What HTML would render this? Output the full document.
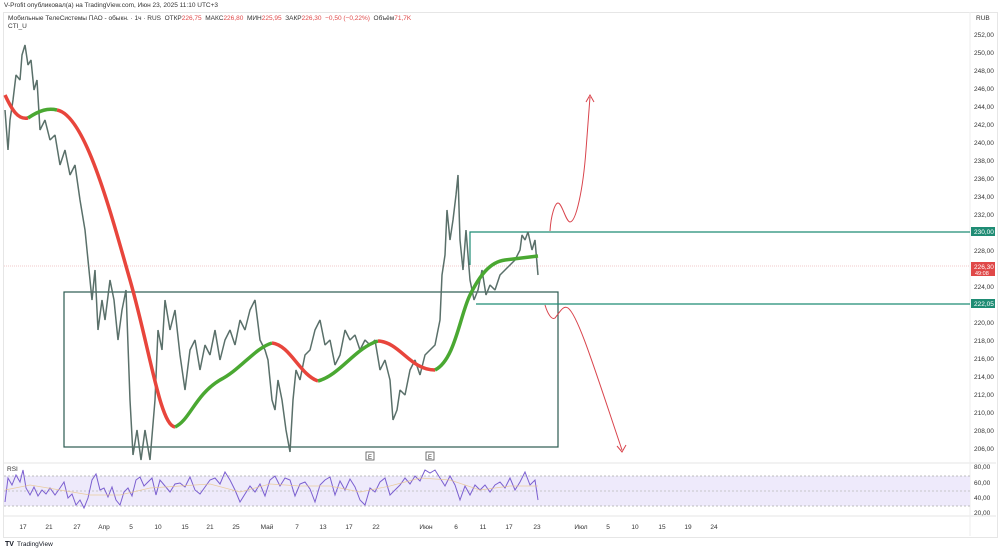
<!DOCTYPE html>
<html><head><meta charset="utf-8"><style>
body{margin:0;width:1000px;height:551px;background:#fff;font-family:"Liberation Sans","Noto Sans CJK SC",sans-serif;overflow:hidden;position:relative}
.t{position:absolute;font-size:6.5px;color:#333;white-space:nowrap}
.r{color:#e04848}
</style></head><body>
<div class="t" style="left:4px;top:2px">V-Profit опубликовал(а) на TradingView.com, Июн 23, 2025 11:10 UTC+3</div>
<div style="position:absolute;left:3px;top:12px;width:993px;height:524px;border:1px solid #e6e6e6"></div>
<div class="t" style="left:8px;top:15px">Мобильные ТелеСистемы ПАО - обыкн. · 1ч · RUS &nbsp;ОТКР<span class="r">226,75</span> &nbsp;МАКС<span class="r">226,80</span> &nbsp;МИН<span class="r">225,95</span> &nbsp;ЗАКР<span class="r">226,30 &nbsp;−0,50 (−0,22%)</span> &nbsp;Объём<span class="r">71,7K</span></div>
<div class="t" style="left:8px;top:23px">CTI_U</div>
<div class="t" style="left:976px;top:15px">RUB</div>
<svg width="1000" height="551" style="position:absolute;left:0;top:0">
<line x1="4" y1="463" x2="996" y2="463" stroke="#e6e6e6"/>
<line x1="4" y1="516" x2="996" y2="516" stroke="#e6e6e6"/>
<line x1="970" y1="12" x2="970" y2="536" stroke="#eee"/>
<g font-size="6.5" fill="#333" font-family="Liberation Sans">
<text x="974" y="37">252,00</text><text x="974" y="55">250,00</text><text x="974" y="73">248,00</text><text x="974" y="91">246,00</text><text x="974" y="109">244,00</text><text x="974" y="127">242,00</text><text x="974" y="145">240,00</text><text x="974" y="163">238,00</text><text x="974" y="181">236,00</text><text x="974" y="199">234,00</text><text x="974" y="217">232,00</text><text x="974" y="253">228,00</text><text x="974" y="289">224,00</text><text x="974" y="325">220,00</text><text x="974" y="343">218,00</text><text x="974" y="361">216,00</text><text x="974" y="379">214,00</text><text x="974" y="397">212,00</text><text x="974" y="415">210,00</text><text x="974" y="433">208,00</text><text x="974" y="451">206,00</text>
<text x="974" y="469">80,00</text><text x="974" y="485">60,00</text><text x="974" y="500">40,00</text><text x="974" y="515">20,00</text>
<g text-anchor="middle"><text x="23" y="529">17</text><text x="49" y="529">21</text><text x="77" y="529">27</text><text x="104" y="529">Апр</text><text x="131" y="529">5</text><text x="158" y="529">10</text><text x="185" y="529">15</text><text x="210" y="529">21</text><text x="236" y="529">25</text><text x="267" y="529">Май</text><text x="297" y="529">7</text><text x="323" y="529">13</text><text x="349" y="529">17</text><text x="376" y="529">22</text><text x="426" y="529">Июн</text><text x="456" y="529">6</text><text x="483" y="529">11</text><text x="509" y="529">17</text><text x="537" y="529">23</text><text x="581" y="529">Июл</text><text x="608" y="529">5</text><text x="635" y="529">10</text><text x="662" y="529">15</text><text x="688" y="529">19</text><text x="714" y="529">24</text></g>
<text x="7" y="471">RSI</text>
</g>
<line x1="4" y1="266" x2="970" y2="266" stroke="#f0c8c8" stroke-dasharray="1,1"/>
<rect x="64" y="292" width="494" height="155" fill="none" stroke="#2b5a50" stroke-width="1.2"/>
<polyline points="470,265 470,232 970,232" fill="none" stroke="#1f8c74" stroke-width="1.2"/>
<line x1="476" y1="304" x2="970" y2="304" stroke="#1f8c74" stroke-width="1.2"/>
<polyline fill="none" stroke="#5a706a" stroke-width="1.5" stroke-linejoin="bevel" points="5,110 8,150 10,120 13,100 16,75 20,80 22,55 25,45 28,65 31,60 34,90 37,80 40,130 45,120 50,140 55,135 60,165 65,150 70,175 75,165 80,200 85,230 88,260 92,300 95,270 98,330 102,300 105,320 110,280 114,300 118,340 122,310 126,290 130,400 133,455 137,430 141,460 145,430 150,460 155,400 158,330 162,350 165,300 170,330 175,310 180,355 185,390 190,350 195,340 200,370 205,345 210,355 215,330 220,360 225,340 230,330 235,345 240,320 245,330 250,310 255,300 260,340 265,350 268,360 272,400 275,410 278,380 282,400 286,430 290,452 293,400 296,370 300,380 305,355 310,350 315,330 320,320 325,345 330,340 335,365 340,355 345,330 350,340 355,335 360,350 365,340 370,345 375,340 380,370 385,360 390,380 393,420 397,410 400,390 405,395 410,370 415,360 420,375 425,355 430,350 435,345 440,320 442,275 445,255 447,210 450,240 453,220 456,195 458,175 460,240 463,270 466,230 470,280 474,300 478,290 482,270 486,295 490,285 495,290 500,275 505,270 510,265 515,260 520,250 522,235 525,240 528,232 532,250 535,240 538,275"/>
<path d="M5,95 C12,110 18,120 28,118" fill="none" stroke="#e8453c" stroke-width="3.5"/>
<path d="M28,118 C40,110 48,108 57,110" fill="none" stroke="#4aa832" stroke-width="3.5"/>
<path d="M57,110 C85,115 110,210 130,280 C150,350 160,425 175,427" fill="none" stroke="#e8453c" stroke-width="3.5"/>
<path d="M175,427 C190,420 195,395 220,380 C240,370 255,348 272,343" fill="none" stroke="#4aa832" stroke-width="3.5"/>
<path d="M272,343 C290,345 300,375 318,381" fill="none" stroke="#e8453c" stroke-width="3.5"/>
<path d="M318,381 C340,375 355,348 378,341" fill="none" stroke="#4aa832" stroke-width="3.5"/>
<path d="M378,341 C400,342 410,370 435,370" fill="none" stroke="#e8453c" stroke-width="3.5"/>
<path d="M435,370 C455,360 460,315 470,295 C480,275 490,262 505,260 L538,256" fill="none" stroke="#4aa832" stroke-width="3.5"/>
<path d="M550,231 C551,215 555,203 558,203 C562,203 566,222 570,222 C576,222 583,190 586,150 L590,97" fill="none" stroke="#d9444c" stroke-width="1"/>
<path d="M586,102 L590,95 L594,102" fill="none" stroke="#d9444c" stroke-width="1"/>
<path d="M545,305 C548,315 552,320 555,318 C560,312 563,305 568,308 C578,315 595,370 622,450" fill="none" stroke="#d9444c" stroke-width="1"/>
<path d="M617,446 L622,452 L626,445" fill="none" stroke="#d9444c" stroke-width="1"/>
<rect x="366" y="452" width="8" height="8" fill="#fff" stroke="#555" stroke-width=".8"/><text x="368" y="459" font-size="6" fill="#333">E</text>
<rect x="426" y="452" width="8" height="8" fill="#fff" stroke="#555" stroke-width=".8"/><text x="428" y="459" font-size="6" fill="#333">E</text>
<rect x="4" y="476" width="966" height="30" fill="#eeeafb"/>
<line x1="4" y1="476" x2="970" y2="476" stroke="#aaa" stroke-dasharray="2,2" stroke-width=".7"/>
<line x1="4" y1="491" x2="970" y2="491" stroke="#bbb" stroke-dasharray="2,2" stroke-width=".7"/>
<line x1="4" y1="506" x2="970" y2="506" stroke="#aaa" stroke-dasharray="2,2" stroke-width=".7"/>
<polyline fill="none" stroke="#7b5fd0" stroke-width="1" points="5,502 8,478 12,485 16,475 20,482 23,470 26,488 30,495 34,487 38,496 42,490 46,494 50,488 55,495 60,488 64,482 68,498 72,494 76,505 80,500 84,508 88,498 92,480 96,474 100,490 104,488 108,497 112,487 116,500 120,505 124,492 128,488 132,496 136,480 140,477 144,486 148,482 152,478 156,495 160,480 165,486 170,492 175,484 180,483 185,487 190,477 195,490 200,494 205,487 210,480 215,478 220,484 225,472 230,480 235,490 240,502 245,494 250,486 255,492 260,484 265,496 270,480 275,476 280,486 285,478 290,480 295,496 300,484 305,482 310,489 315,502 320,485 325,480 330,477 335,495 340,481 345,490 350,479 355,487 360,500 365,505 370,488 375,492 380,482 385,478 390,495 395,490 400,485 405,478 410,484 415,476 420,481 425,470 430,473 435,470 440,478 445,486 450,476 455,485 460,500 465,486 470,495 475,485 480,490 485,485 490,492 495,485 500,482 505,488 510,478 515,490 520,482 525,472 530,485 535,480 538,500"/>
<polyline fill="none" stroke="#e8c48a" stroke-width=".7" opacity=".8" points="5,490 30,485 60,490 90,495 120,495 150,488 180,486 210,484 240,492 270,484 300,486 330,486 360,492 390,486 420,478 450,480 480,490 510,486 538,486"/>
<rect x="971" y="227" width="24" height="9" fill="#1f8c74"/><text x="974" y="234" font-size="6.5" fill="#fff">230,00</text>
<rect x="971" y="262" width="24" height="14" fill="#e04848"/><text x="974" y="269" font-size="6.5" fill="#fff">226,30</text><text x="975" y="275" font-size="5.5" fill="#fff">49:08</text>
<rect x="971" y="299" width="24" height="9" fill="#1f8c74"/><text x="974" y="306" font-size="6.5" fill="#fff">222,05</text>
<text x="5" y="546" font-size="7" font-weight="bold" fill="#131722">TV</text><text x="17" y="546" font-size="6.5" fill="#131722">TradingView</text>
</svg>
</body></html>
